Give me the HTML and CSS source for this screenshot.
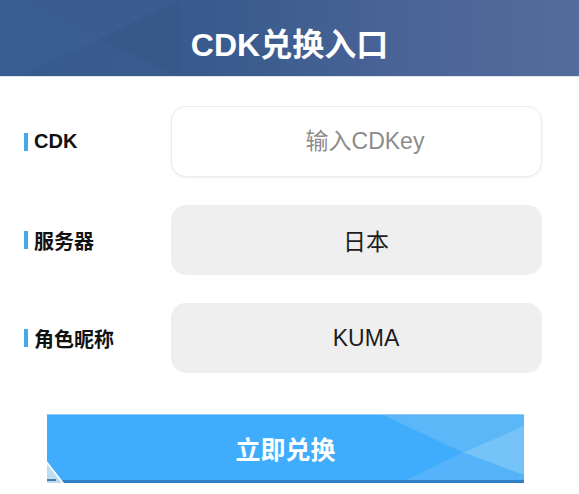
FILE: index.html
```html
<!DOCTYPE html>
<html lang="zh-CN">
<head>
<meta charset="utf-8">
<title>CDK兑换入口</title>
<link rel="stylesheet" href="styles.css">
</head>
<body>
<header class="top">
  <svg class="top-deco" viewBox="0 0 579 77" preserveAspectRatio="none" aria-hidden="true">
    <polygon points="0,0 27,0 100,40 20,77 0,77" fill="#3c5f94" opacity="0.7"/>
    <polygon points="27,0 180,0 100,40" fill="#3d5e90" opacity="0.5"/>
    <polygon points="180,0 100,40 180,77" fill="#32527f" opacity="0.25"/>
    <polygon points="20,77 100,40 180,77" fill="#3a5b8e" opacity="0.5"/>
  </svg>
  <h1 class="title">CDK兑换入口</h1>
</header>

<main class="form">
  <div class="rows">
    <div class="row">
      <span class="label">CDK</span>
      <input class="field field-input" type="text" placeholder="输入CDKey">
    </div>
    <div class="row">
      <span class="label">服务器</span>
      <div class="field">日本</div>
    </div>
    <div class="row">
      <span class="label">角色昵称</span>
      <div class="field">KUMA</div>
    </div>
  </div>

  <div class="actions">
    <button class="submit" type="button">
      <svg class="submit-deco" viewBox="0 0 477 69" preserveAspectRatio="none" aria-hidden="true">
        <polygon points="336,0 477,0 477,11 416,38" fill="#5cb7f8"/>
        <polygon points="477,11 416,38 477,61" fill="#76c3f7"/>
        <polygon points="416,38 477,61 477,69 353,69" fill="#55b4f9"/>
        <rect x="0" y="66" width="477" height="3" fill="#2e80c3"/>
        <polygon points="0,47 17,69 0,69" fill="#ffffff"/>
        <polygon points="0,50 15,69 0,69" fill="#bcdcf4"/>
        <rect x="0" y="65" width="9" height="2" fill="#4a7aa6"/>
      </svg>
      <span class="submit-text">立即兑换</span>
    </button>
  </div>
</main>
</body>
</html>
```

FILE: styles.css
```css
html, body {
  margin: 0;
  padding: 0;
  background: #ffffff;
}

body {
  font-family: "Liberation Sans", "Noto Sans CJK SC", sans-serif;
  color: #1a1a1a;
}

.top {
  position: relative;
  height: 77px;
  box-sizing: border-box;
  padding-top: 8px;
  display: flex;
  align-items: center;
  justify-content: center;
  background: linear-gradient(90deg, #375a8e 0%, #385a8c 35%, #4a6496 70%, #546c9b 100%);
  border-bottom: 1px solid #dfe7f1;
  overflow: hidden;
}

.top-deco {
  position: absolute;
  left: 0;
  top: 0;
  width: 100%;
  height: 100%;
}

.title {
  position: relative;
  margin: 0;
  font-size: 32px;
  font-weight: bold;
  color: #ffffff;
}

.form {
  padding: 29px 37px 0 24px;
}

.rows {
  display: flex;
  flex-direction: column;
  gap: 28px;
}

.row {
  display: flex;
  align-items: center;
  justify-content: space-between;
}

.label {
  display: flex;
  align-items: center;
  gap: 6px;
  font-size: 20px;
  font-weight: bold;
  color: #111111;
}

.label::before {
  content: "";
  display: block;
  width: 4px;
  height: 18px;
  background: #46a8e6;
}

.field {
  width: 371px;
  height: 70px;
  box-sizing: border-box;
  border-radius: 15px;
  background: #efefef;
  display: flex;
  align-items: center;
  justify-content: center;
  padding-left: 19px;
  font-family: "Liberation Sans", "Noto Sans CJK SC", sans-serif;
  font-size: 23px;
  color: #1e1e1e;
}

.field-input {
  height: 71px;
  background: #ffffff;
  border: 1px solid #ececec;
  box-shadow: 0 1px 3px rgba(0, 0, 0, 0.06);
  text-align: center;
  outline: none;
  margin: 0;
}

.field-input::placeholder {
  color: #8c8c8c;
  opacity: 1;
}

.actions {
  padding: 41px 18px 0 23px;
}

.submit {
  position: relative;
  display: flex;
  align-items: center;
  justify-content: center;
  width: 477px;
  height: 69px;
  padding: 0 0 3px 0;
  border: none;
  border-top: 1px solid #8ccbf6;
  box-sizing: border-box;
  background: #3fadfc;
  overflow: hidden;
  cursor: pointer;
}

.submit-deco {
  position: absolute;
  left: 0;
  top: 0;
  width: 100%;
  height: 100%;
}

.submit-text {
  position: relative;
  font-family: "Liberation Sans", "Noto Sans CJK SC", sans-serif;
  font-size: 25px;
  font-weight: bold;
  color: #ffffff;
}
```
